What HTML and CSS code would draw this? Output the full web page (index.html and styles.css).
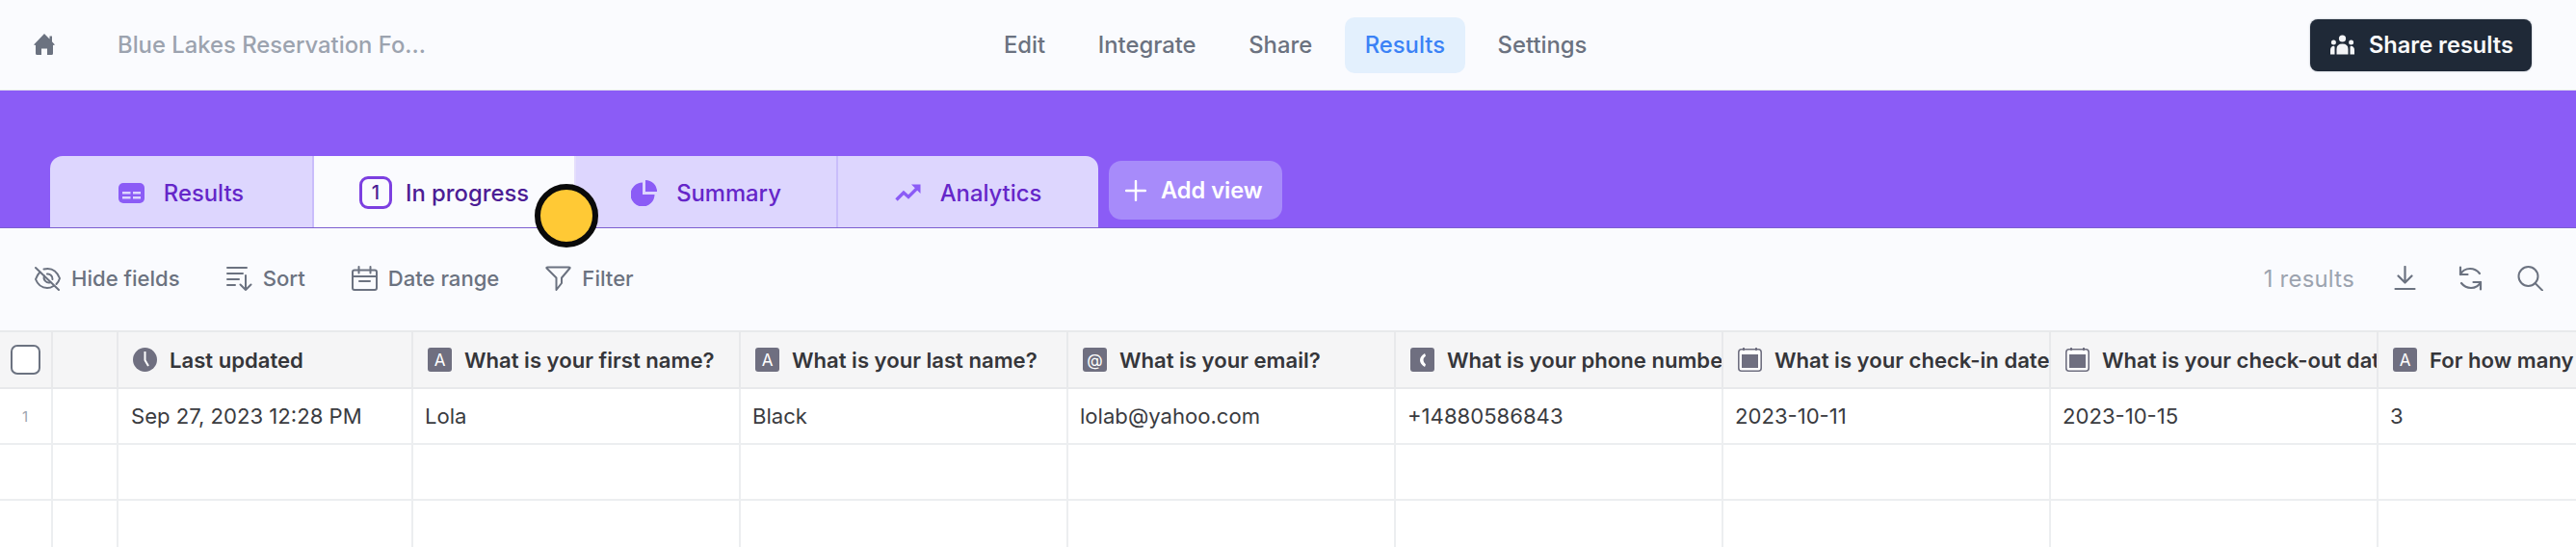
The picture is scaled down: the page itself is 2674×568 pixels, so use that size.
FILE: index.html
```html
<!DOCTYPE html>
<html lang="en">
<head>
<meta charset="utf-8">
<title>Results</title>
<link rel="stylesheet" href="styles.css">
</head>
<body>
<header class="topbar">
  <div class="crumbs">
    <svg class="home" viewBox="0 0 22 22"><path d="M11 0 16.500 5.600V2.500H19V8.200L22 11.500 20 12V20.500Q20 22 18.500 22H14V15.500H8V22H3.500Q2 22 2 20.500V12L0 11.500Z"/></svg>
    <span class="form-title">Blue Lakes Reservation Fo...</span>
  </div>
  <nav class="mainnav">
    <a class="navlink">Edit</a>
    <a class="navlink">Integrate</a>
    <a class="navlink">Share</a>
    <a class="navlink navlink-on">Results</a>
    <a class="navlink">Settings</a>
  </nav>
  <button class="sharebtn">
    <svg class="ic-users" viewBox="0 0 25 21"><circle cx="12.500" cy="4" r="3.600"/><circle cx="3.400" cy="8" r="2.500"/><circle cx="21.600" cy="8" r="2.500"/><path d="M6.500 20.500V15Q6.500 9.500 12.500 9.500T18.500 15V20.500ZM0 20.500V16Q0 12 3.800 11.800 4.500 12 4.500 13V20.500ZM25 20.500V16Q25 12 21.200 11.800 20.500 12 20.500 13V20.500Z"/></svg>
    <span>Share results</span>
  </button>
</header>

<section class="band">
  <div class="tabs">
    <div class="tab">
      <svg class="ic-tab" viewBox="0 0 27 21"><rect width="27" height="21" rx="5" fill="#8b5cf6"/><path d="M4 9h8.500v2.500H4zM15 9h8v2.500h-8zM4 14h8.500v2.500H4zM15 14h8v2.500h-8z" fill="#ddd6fe"/></svg>
      <span>Results</span>
    </div>
    <div class="tab tab-on">
      <span class="count">1</span>
      <span>In progress</span>
    </div>
    <div class="tab">
      <svg class="ic-tab" viewBox="0 0 27 27"><path d="M12 2.500V15H24.500A12.500 12.500 0 1 1 12 2.500Z" fill="#8b5cf6"/><path d="M15 0A12 12 0 0 1 27 12H15Z" fill="#8b5cf6"/></svg>
      <span>Summary</span>
    </div>
    <div class="tab">
      <svg class="ic-trend" viewBox="0 0 27 18"><path d="M1.500 16.500 9 9l5 4.500L24.500 3" fill="none" stroke="#8b5cf6" stroke-width="3.400"/><path d="M17 0.500H26.500V10Z" fill="#8b5cf6"/></svg>
      <span>Analytics</span>
    </div>
  </div>
  <button class="addview">
    <svg class="ic-plus" viewBox="0 0 22 22"><path d="M11 1v20M1 11h20" fill="none" stroke="#fff" stroke-width="2.400" stroke-linecap="round"/></svg>
    <span>Add view</span>
  </button>
</section>

<span class="cursor"></span>

<section class="toolbar">
  <div class="tool"><svg class="ic-tool" viewBox="0 0 27 26"><g fill="none" stroke="#6b7280" stroke-width="2" stroke-linecap="round" stroke-linejoin="round"><path d="M1 2 25 25"/><path d="M5.500 6.500Q2.500 9.500 1 14q3.500 9 12 9 3.500 0 6.500-2"/><path d="M9.500 3.500Q11.500 3 13.500 3 22 3 26 13q-1 3.500-3.500 6"/><path d="M10 10.500a5 5 0 0 0 6.500 6.500M13 8.500a5 5 0 0 1 5.500 5.500"/></g></svg><span>Hide fields</span></div>
  <div class="tool"><svg class="ic-tool" viewBox="0 0 27 26"><path d="M1 2H21M1 8H17M1 14H13M1 20H9M20 10V25M14.500 19.500 20 25l5.500-5.500" fill="none" stroke="#6b7280" stroke-width="2" stroke-linecap="round" stroke-linejoin="round"/></svg><span>Sort</span></div>
  <div class="tool"><svg class="ic-tool" viewBox="0 0 27 26"><path d="M3 4.500H24Q26 4.500 26 6.500V23Q26 25 24 25H3Q1 25 1 23V6.500Q1 4.500 3 4.500ZM7.500 1V7.500M19.500 1V7.500M1 11H26M8 16H19" fill="none" stroke="#6b7280" stroke-width="2" stroke-linecap="round" stroke-linejoin="round"/></svg><span>Date range</span></div>
  <div class="tool"><svg class="ic-tool" viewBox="0 0 27 26"><path d="M1.500 2.500Q1 1.500 2.500 1.500H24.500Q26 1.500 25.500 2.500L17 12.500V18L11.500 25V12.500Z" fill="none" stroke="#6b7280" stroke-width="2" stroke-linejoin="round"/></svg><span>Filter</span></div>
  <div class="tool-right">
    <span class="count-text">1 results</span>
    <svg class="ic-tool ic-download" viewBox="0 0 27 26"><path d="M13.500 1V17M6.500 10.500 13.500 17.500l7-7M3.500 24H23.500" fill="none" stroke="#6b7280" stroke-width="2.200" stroke-linecap="round" stroke-linejoin="round"/></svg>
    <svg class="ic-tool ic-refresh" viewBox="0 0 27 26"><g fill="none" stroke="#6b7280" stroke-width="2.200" stroke-linecap="round" stroke-linejoin="round"><path d="M3 9Q6 3 13 3 19 3 23 8"/><path d="M24 17Q21 23 14 23 8 23 4 18"/><path d="M3 1.500V9H10.500M24 24.500V17H16.500"/></g></svg>
    <svg class="ic-tool ic-search" viewBox="0 0 27 26"><circle cx="11.500" cy="11" r="10" fill="none" stroke="#6b7280" stroke-width="2"/><path d="M18.500 18 26 25.500" fill="none" stroke="#6b7280" stroke-width="2" stroke-linecap="round"/></svg>
  </div>
</section>

<section class="grid">
  <div class="row row-head">
    <div class="cell cell-sel"><span class="check"></span></div>
    <div class="cell cell-gap"></div>
    <div class="cell cell-first"><svg class="fieldic" viewBox="0 0 25 25"><circle cx="12.500" cy="12.500" r="12.500" fill="#6f6f80"/><path d="M12.500 4V13L16 19" fill="none" stroke="#fff" stroke-width="2"/></svg><span class="head-text">Last updated</span></div>
    <div class="cell"><span class="fieldic fieldic-text">A</span><span class="head-text">What is your first name?</span></div>
    <div class="cell"><span class="fieldic fieldic-text">A</span><span class="head-text">What is your last name?</span></div>
    <div class="cell"><span class="fieldic fieldic-text">@</span><span class="head-text">What is your email?</span></div>
    <div class="cell"><svg class="fieldic" viewBox="0 0 25 25"><rect width="25" height="25" rx="3" fill="#6f6f80"/><path d="M15 6Q10 9 10 13T15 20l1-2.500Q13.500 15.500 13.500 13T16 8.500Z" fill="#fff"/></svg><span class="head-text">What is your phone number?</span></div>
    <div class="cell"><svg class="fieldic" viewBox="0 0 25 25"><rect x="0.800" y="1.800" width="23.400" height="22.400" rx="3" fill="#fff" stroke="#6f6f80" stroke-width="1.600"/><rect x="4" y="7" width="17" height="14" fill="#6f6f80"/><path d="M6 0v3M19 0v3" stroke="#6f6f80" stroke-width="2"/></svg><span class="head-text">What is your check-in date?</span></div>
    <div class="cell"><svg class="fieldic" viewBox="0 0 25 25"><rect x="0.800" y="1.800" width="23.400" height="22.400" rx="3" fill="#fff" stroke="#6f6f80" stroke-width="1.600"/><rect x="4" y="7" width="17" height="14" fill="#6f6f80"/><path d="M6 0v3M19 0v3" stroke="#6f6f80" stroke-width="2"/></svg><span class="head-text">What is your check-out date?</span></div>
    <div class="cell"><span class="fieldic fieldic-text">A</span><span class="head-text">For how many nights will you stay?</span></div>
  </div>
  <div class="row">
    <div class="cell cell-sel"><span class="rownum">1</span></div>
    <div class="cell cell-gap"></div>
    <div class="cell cell-first">Sep 27, 2023 12:28 PM</div>
    <div class="cell">Lola</div>
    <div class="cell">Black</div>
    <div class="cell">lolab@yahoo.com</div>
    <div class="cell">+14880586843</div>
    <div class="cell">2023-10-11</div>
    <div class="cell">2023-10-15</div>
    <div class="cell">3</div>
  </div>
  <div class="row">
    <div class="cell cell-sel"></div><div class="cell cell-gap"></div><div class="cell cell-first"></div>
    <div class="cell"></div><div class="cell"></div><div class="cell"></div><div class="cell"></div><div class="cell"></div><div class="cell"></div><div class="cell"></div>
  </div>
  <div class="row">
    <div class="cell cell-sel"></div><div class="cell cell-gap"></div><div class="cell cell-first"></div>
    <div class="cell"></div><div class="cell"></div><div class="cell"></div><div class="cell"></div><div class="cell"></div><div class="cell"></div><div class="cell"></div>
  </div>
</section>
</body>
</html>
```

FILE: styles.css
```css
* { box-sizing: border-box; }
html, body { height: 100%; overflow: hidden; }
body {
  margin: 0;
  position: relative;
  background: #fafbfe;
  font-family: Inter, "Liberation Sans", sans-serif;
  color: #374151;
}
svg { display: block; flex: none; }
button { font: inherit; border: 0; padding: 0; }

.topbar {
  height: 94px;
  display: flex;
  align-items: center;
  border-bottom: 1px solid #e5e7eb;
}
.crumbs {
  flex: 0 0 1021px;
  display: flex;
  align-items: center;
  padding-left: 35px;
}
.home { width: 22px; height: 22px; fill: #6b7280; margin-top: -1px; }
.form-title { margin-left: 65px; font-size: 23.8px; font-weight: 500; color: #9ca3af; }
.mainnav { display: flex; gap: 12.6px; }
.navlink {
  height: 58px;
  padding: 0 21px;
  display: flex;
  align-items: center;
  border-radius: 10px;
  font-size: 23.8px;
  font-weight: 500;
  color: #6b7280;
}
.navlink-on { background: #e3f0fd; color: #3b82f6; }
.sharebtn {
  margin-left: auto;
  margin-right: 46px;
  width: 230px;
  height: 54px;
  display: flex;
  align-items: center;
  padding-left: 21px;
  gap: 15px;
  background: #1f2937;
  color: #f9fafb;
  border-radius: 8px;
  font-size: 23.6px;
  font-weight: 600;
  box-shadow: 0 0 2px #9ca3af;
}
.ic-users { width: 25px; height: 21px; fill: #f3f4f6; }

.band {
  height: 143px;
  display: flex;
  align-items: flex-end;
  padding: 0 0 0 52px;
  background: #8b5cf6;
  border-bottom: 1px solid #7c5fd0;
}
.tabs { display: flex; border-radius: 13px 13px 0 0; overflow: hidden; }
.tab {
  width: 272px;
  height: 74px;
  display: flex;
  align-items: center;
  justify-content: center;
  gap: 20px;
  padding-top: 2px;
  background: #ddd6fe;
  border-right: 2px solid #c9bdfb;
  color: #6526c9;
  font-size: 23.8px;
  font-weight: 500;
}
.tab:first-child { width: 274px; }
.tab:last-child { border-right: 0; width: 270px; }
.tab-on { background: #fafbfe; color: #4c1d95; gap: 14px; border-right-color: #e4defc; }
.ic-tab { width: 27px; height: 27px; }
.ic-trend { width: 27px; height: 18px; }
.count {
  width: 34px;
  height: 34px;
  display: flex;
  align-items: center;
  justify-content: center;
  border: 3px solid #7c3fe0;
  border-radius: 9px;
  font-size: 20px;
  font-weight: 500;
}
.addview {
  margin: 0 0 8px 11px;
  width: 180px;
  height: 61px;
  display: flex;
  align-items: center;
  padding-left: 17px;
  gap: 15px;
  background: #a78bfa;
  color: #fff;
  border-radius: 13px;
  font-size: 23.6px;
  font-weight: 600;
}
.ic-plus { width: 22px; height: 22px; }

.cursor {
  position: absolute;
  left: 555px;
  top: 191px;
  width: 66px;
  height: 66px;
  border: 6px solid #0a0a0a;
  border-radius: 50%;
  background: #ffc935;
  z-index: 2;
}

.toolbar {
  height: 106px;
  display: flex;
  align-items: center;
  gap: 48px;
  padding: 0 34px 2px 36px;
  color: #6b7280;
  font-size: 22.1px;
  font-weight: 500;
}
.tool { display: flex; align-items: center; gap: 11px; }
.ic-tool { width: 27px; height: 26px; }
.tool-right { margin-left: auto; display: flex; align-items: center; }
.count-text { font-size: 23.8px; font-weight: 400; color: #9ca3af; letter-spacing: 0.3px; }
.ic-download { margin-left: 39px; }
.ic-refresh { margin-left: 41px; }
.ic-search { margin-left: 35px; }

.grid { width: 2800px; background: #fff; }
.row {
  display: grid;
  grid-template-columns: 55px 68px 306px repeat(6, 340px) 360px;
  height: 58px;
  border-bottom: 2px solid #eceef0;
  font-size: 22.1px;
  color: #3a3b3f;
}
.row-head {
  height: 61px;
  background: #f5f5f6;
  border-top: 2px solid #e8e9eb;
  border-bottom: 2px solid #e8e9eb;
  color: #35363a;
  font-weight: 600;
}
.cell {
  min-width: 0;
  display: flex;
  align-items: center;
  gap: 13px;
  padding-left: 12px;
  border-right: 2px solid #eceef0;
  overflow: hidden;
  white-space: nowrap;
}
.cell-first { padding-left: 13px; }
.row-head .cell { padding-left: 15px; border-right-color: #e8e9eb; }
.row .cell-sel { padding: 0 1px 0 0; justify-content: center; }
.row .cell-gap { padding: 0; }
.head-text { flex: none; }
.check {
  width: 31px;
  height: 31px;
  background: #fff;
  border: 2px solid #6b7280;
  border-radius: 7px;
}
.rownum { font-size: 15px; color: #9ca3af; }
.fieldic { width: 25px; height: 25px; flex: none; }
.fieldic-text {
  display: flex;
  align-items: center;
  justify-content: center;
  background: #6f6f80;
  border-radius: 3px;
  color: #fff;
  font-size: 17px;
  font-weight: 400;
}
```
